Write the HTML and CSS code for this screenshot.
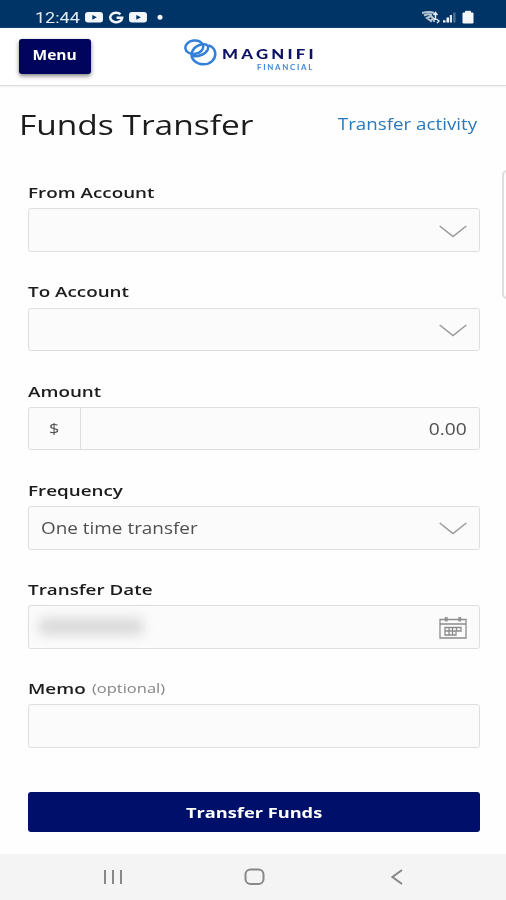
FILE: index.html
```html
<!DOCTYPE html>
<html lang="en">
<head>
<meta charset="utf-8">
<title>Funds Transfer</title>
<link rel="stylesheet" href="styles.css">
</head>
<body>
<div class="status">
  <span class="clock wide">12:44</span>
  <svg class="status-apps" width="82" height="14" viewBox="0 0 82 14">
    <rect x="0" y="2" width="18" height="10.5" rx="3" fill="#f2f6fa"/><path d="M7.3 4.900v4.800l4.600-2.400z" fill="#036"/>
    <path d="M35.500 4.200A6 4.700 0 1 0 37.200 7.800H31.600" fill="none" stroke="#f2f6fa" stroke-width="2.500"/>
    <rect x="44" y="2" width="18" height="10.500" rx="3" fill="#f2f6fa"/><path d="M51.300 4.900v4.800l4.600-2.400z" fill="#036"/>
    <circle cx="75" cy="7.300" r="2.500" fill="#f2f6fa"/>
  </svg>
  <svg class="status-system" width="54" height="14" viewBox="0 0 54 14">
    <path d="M1 3q8-2 12 0M3 5.500q5-2 8-.5M6 8l4-2 2 2-2 3z" fill="none" stroke="#b5c5d4" stroke-width="2"/>
    <path d="M14.500 10V3m-2 2.200 2-2.700 2 2.700M13 8v4m2.500-3 2.500 2-2 2" fill="none" stroke="#e8eef4" stroke-width="1.400"/>
    <path d="M22 12.500v-2.300h2.500v2.300zM25.500 12.500V7.500H28v5z" fill="#f2f6fa"/><path d="M28.800 12.500V5H31v7.500z" fill="#dce5ed"/><path d="M32.200 12.500V2.500h2.300v10z" fill="#4c7193"/>
    <path d="M42 3h2.500V1.300h5V3H52v10H42z" fill="#f5f7fb" stroke="#f5f7fb" stroke-linejoin="round"/>
  </svg>
</div>
<header class="header">
  <button class="menu"><span class="wide">Menu</span></button>
  <div class="brand">
    <svg width="34" height="30" viewBox="0 0 34 30">
      <g fill="none" stroke="#3480d8" stroke-width="2.500">
        <path d="M25.500 6.200C30 8 32.300 11.500 32.300 15c0 5.800-5.300 10.300-11.800 10.300S8.500 21 8.500 15.500"/>
        <ellipse cx="11.300" cy="8.200" rx="9" ry="6.700" transform="rotate(-8 11.300 8.200)"/>
        <path d="M8.500 16C9 9.500 15 5 21 5.200c3.500.2 5 2.200 3.800 5.300C23 14.800 16 18 9.500 17"/>
      </g>
    </svg>
    <div class="brand-words">
      <span class="brand-name">MAGNIFI</span>
      <span class="brand-sub">FINANCIAL</span>
    </div>
  </div>
</header>
<main class="page">
  <div class="heading">
    <h1 class="wide">Funds Transfer</h1>
    <a class="activity wide">Transfer activity</a>
  </div>
  <form class="form">
    <div class="field"><label><span class="wide">From Account</span></label>
      <div class="box"><svg class="chevron" width="28" height="14" viewBox="0 0 28 14"><path d="M.7 2 14 12.500 27.300 2"/></svg></div></div>
    <div class="field"><label><span class="wide">To Account</span></label>
      <div class="box"><svg class="chevron" width="28" height="14" viewBox="0 0 28 14"><path d="M.7 2 14 12.500 27.300 2"/></svg></div></div>
    <div class="field"><label><span class="wide">Amount</span></label>
      <div class="box"><span class="currency"><span class="wide">$</span></span><span class="amount wide">0.00</span></div></div>
    <div class="field"><label><span class="wide">Frequency</span></label>
      <div class="box"><span class="value wide">One time transfer</span><svg class="chevron" width="28" height="14" viewBox="0 0 28 14"><path d="M.7 2 14 12.500 27.300 2"/></svg></div></div>
    <div class="field"><label><span class="wide">Transfer Date</span></label>
      <div class="box"><span class="redacted"></span>
        <svg class="calendar" width="28" height="24" viewBox="0 0 28 24">
          <path d="M1 4.500h26V23H1zM1 9h26M6.500 2v4.500M8 2v4.500M20 2v4.500M21.500 2v4.500M6 12.500h16V16h-5v4H6zM6 16h11M10 12.500V20M13.500 12.500V20M17.500 12.500V16"/>
        </svg></div></div>
    <div class="field"><label><span class="wide">Memo</span><span class="optional wide">(optional)</span></label>
      <div class="box"></div></div>
    <button class="submit" type="button"><span class="wide">Transfer Funds</span></button>
  </form>
  <div class="side-panel"></div>
</main>
<nav class="nav">
  <svg width="20" height="16" viewBox="0 0 20 16"><path d="M2 1v14M10 1v14M18 1v14"/></svg>
  <svg width="22" height="18" viewBox="0 0 22 18"><rect x="1.500" y="1.500" width="18" height="14.500" rx="5"/></svg>
  <svg width="12" height="16" viewBox="0 0 12 16"><path d="M11 1 1.500 8l9.500 7"/></svg>
</nav>
</body>
</html>
```

FILE: styles.css
```css
* { box-sizing: border-box; }
body {
  margin: 0;
  width: 506px;
  height: 900px;
  overflow: hidden;
  display: flex;
  flex-direction: column;
  background: #fefefe;
  color: #1c1c1c;
  font-family: "Open Sans", "Noto Sans", sans-serif;
}
button { border: 0; padding: 0; font-family: inherit; }
.wide { display: inline-block; white-space: nowrap; transform: scaleX(1.24); transform-origin: left center; }

.status {
  flex: none;
  height: 27.500px;
  background: #003466;
  display: flex;
  align-items: flex-start;
  padding: 10px 31px 0 35px;
}
.clock { width: 50px; font: 15px/16px Roboto, sans-serif; color: #e4ecf3; transform: scaleX(1.2); }
.status-apps { flex: none; }
.status-system { flex: none; margin-left: auto; }

.header {
  flex: none;
  height: 58px;
  display: flex;
  background: #fff;
  border-bottom: 1px solid #dcdcdc;
  box-shadow: 0 1px 2px #eee;
  padding: 11.500px 0 0 19px;
}
.menu {
  width: 72px;
  height: 35px;
  border-radius: 3px;
  background: #00045c;
  color: #fff;
  box-shadow: 0 2px 4px rgba(0, 0, 0, .5);
  font-size: 14.500px;
  font-weight: 700;
  line-height: 32px;
  padding-bottom: 3px;
}
.menu .wide, .submit .wide { transform-origin: center; }
.menu .wide { transform: scaleX(1.07); }
.submit .wide { transform: scaleX(1.215); }
.brand { display: flex; margin-left: 92px; }
.brand-words { display: flex; flex-direction: column; padding: 6px 0 0 5px; }
.brand-name { color: #0c1264; font: 900 14px/18px Lato, sans-serif; letter-spacing: 2.700px; transform: scaleX(1.2); transform-origin: left center; }
.brand-sub { color: #3d8bdb; font: 700 6.500px/7px Lato, sans-serif; letter-spacing: 1.400px; margin: 1px 0 0 35px; transform: scaleX(1.22); transform-origin: left center; }

.page { position: relative; flex: 1; }
.heading { display: flex; justify-content: space-between; align-items: center; height: 76px; padding: 0 29px 0 19px; }
h1 { margin: 2px 0 0; font-size: 27px; font-weight: 400; line-height: 36px; }
.activity { color: #2878bd; font-size: 15.500px; transform: scaleX(1.21); transform-origin: right center; }

.form { padding: 15.800px 26px 0 28px; }
.field { height: 99.200px; }
.field label { display: flex; height: 31.200px; line-height: 31.200px; font-size: 15px; font-weight: 600; }
.field label .wide:first-child { transform: scaleX(1.255); }
.field label .optional { margin-left: 18px; font-size: 13.500px; font-weight: 400; color: #858585; transform: scaleX(1.22); }
.box {
  height: 43.500px;
  display: flex;
  align-items: center;
  background: #fbfbfb;
  border: 1.500px solid #dedede;
  border-radius: 3px;
  padding-right: 12px;
  font-size: 15.500px;
  color: #505050;
}
.chevron { margin: 1px 0 0 auto; fill: none; stroke: #999; stroke-width: 1.500; }
.currency { width: 52px; align-self: stretch; display: flex; align-items: center; justify-content: center; border-right: 1px solid #dedede; font-size: 14.500px; }
.currency .wide { transform-origin: center; }
.amount { margin-left: auto; transform-origin: right center; }
.value { margin-left: 12px; transform: scaleX(1.22); }
.redacted { width: 104px; height: 17px; margin-left: 10px; border-radius: 5px; background: #d9d9d9; filter: blur(6px); }
.calendar { margin-left: auto; fill: none; stroke: #8c8c8c; stroke-width: 1.300; }
.submit {
  display: block;
  width: 452px;
  height: 40px;
  margin-top: 19.500px;
  border-radius: 3px;
  background: #00106a;
  color: #fff;
  font-size: 15px;
  font-weight: 700;
}
.side-panel { position: absolute; top: 84px; right: -8px; width: 12px; height: 129px; border: 2px solid #dedede; border-radius: 5px; }

.nav {
  flex: none;
  height: 46.500px;
  background: #f4f4f4;
  display: flex;
  justify-content: space-between;
  align-items: center;
  padding: 1px 103px 0 103px;
  fill: none;
  stroke: #888;
  stroke-width: 2;
}
.nav svg:nth-child(2) { margin-right: -4px; margin-left: -8px; }
```
